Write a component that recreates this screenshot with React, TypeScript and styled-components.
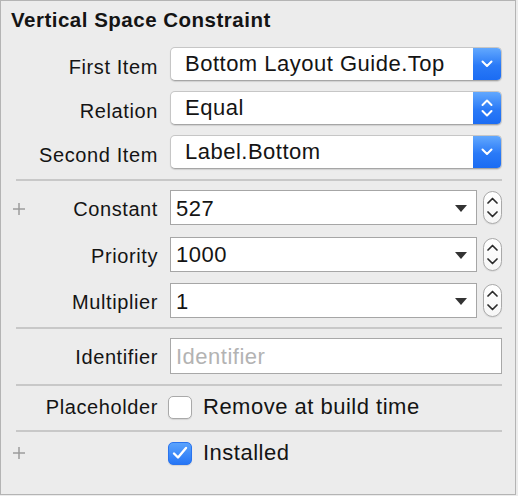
import { createGlobalStyle } from 'styled-components';
import styled from 'styled-components';

const GlobalStyle = createGlobalStyle`
  html, body {
    margin: 0;
    padding: 0;
    background-color: #ececec;
  }

  * {
    box-sizing: border-box;
  }
`;

const Panel = styled.div`
  width: 516px;
  height: 495px;
  border: 1px solid #b4b4b4;
  background-color: #ececec;
  padding-top: 6px;
  display: flex;
  flex-flow: column;
  font-family: 'Liberation Sans', Arial, sans-serif;
  color: #141414;
`;

const Title = styled.h1`
  margin: 0;
  padding-left: 10px;
  font-size: 20.5px;
  line-height: 26px;
  font-weight: 700;
  letter-spacing: 0.5px;
`;

const Section = styled.div<{ $gap: number; $top?: number }>`
  display: flex;
  flex-flow: column;
  gap: ${(p) => p.$gap}px;
  margin-top: ${(p) => p.$top ?? 0}px;
`;

const Separator = styled.div<{ $top?: number }>`
  height: 2px;
  background-color: #c8c8c8;
  margin: ${(p) => p.$top ?? 10}px 13px 9px 15px;
`;

const Row = styled.div<{ $height: number }>`
  display: grid;
  grid-template-columns: 157px 1fr;
  column-gap: 12px;
  align-items: center;
  height: ${(p) => p.$height}px;
  padding-right: 13px;
`;

const LabelCell = styled.div<{ $shift?: number }>`
  display: flex;
  align-items: center;
  justify-content: flex-end;
  padding-left: 11px;
  padding-top: ${(p) => p.$shift ?? 0}px;
  font-size: 20px;
  line-height: 22px;
  letter-spacing: 0.6px;
  white-space: nowrap;
`;

const PlusMark = styled.svg`
  margin-right: auto;
  flex: none;
`;

const PopUp = styled.div`
  display: flex;
  height: 100%;
  background-color: #fff;
  border: 1px solid #c6c6c6;
  border-bottom-color: #a6a6a6;
  border-radius: 5px;
  box-shadow: 0 1px 1px rgba(0, 0, 0, 0.12);
  overflow: hidden;
`;

const PopUpValue = styled.div`
  flex: 1;
  padding-left: 14px;
  font-size: 22px;
  line-height: 32px;
  letter-spacing: 0.5px;
  white-space: nowrap;
  overflow: hidden;
`;

const PopUpButton = styled.div`
  width: 28px;
  flex: none;
  display: flex;
  align-items: center;
  justify-content: center;
  background: linear-gradient(#62a8fe, #2a7af7 55%, #1b6cf3);
`;

const FieldGroup = styled.div`
  display: flex;
  align-items: center;
  gap: 6px;
  height: 100%;
`;

const Combo = styled.div`
  flex: 1;
  height: 100%;
  display: flex;
  align-items: center;
  background-color: #fff;
  border: 1px solid #a6a6a6;
  padding: 2px 9px 0 5px;
`;

const ComboValue = styled.span`
  flex: 1;
  font-size: 22px;
  line-height: 30px;
  letter-spacing: 0.5px;
`;

const Stepper = styled.div`
  width: 19px;
  height: 33px;
  flex: none;
  display: flex;
  flex-flow: column;
  align-items: center;
  justify-content: center;
  gap: 7px;
  border: 1px solid #a9a9a9;
  border-radius: 10px;
  background: linear-gradient(#ffffff, #f6f6f6);
  box-shadow: 0 1px 1px rgba(0, 0, 0, 0.08);
`;

const TextField = styled.div`
  height: 100%;
  background-color: #fff;
  border: 1px solid #a8a8a8;
  padding: 2px 5px 0;
  font-size: 22px;
  line-height: 32px;
  letter-spacing: 0.5px;
  color: #b3b3b3;
`;

const CheckRow = styled.label`
  display: flex;
  align-items: center;
  gap: 11px;
  margin-left: -2px;
  font-size: 22px;
  line-height: 24px;
  letter-spacing: 0.5px;
`;

const Box = styled.span<{ $checked?: boolean }>`
  width: 24px;
  height: 23px;
  flex: none;
  display: flex;
  align-items: center;
  justify-content: center;
  border-radius: 5px;
  border: 1px solid ${(p) => (p.$checked ? '#2a74ee' : '#a9a9a9')};
  background: ${(p) =>
    p.$checked ? 'linear-gradient(#5aa3fd, #2676f6)' : '#fff'};
  box-shadow: 0 1px 1px rgba(0, 0, 0, 0.1);
`;

function Plus() {
  return (
    <PlusMark width="14" height="14" viewBox="0 0 14 14">
      <path d="M7 1v12M1 7h12" stroke="#9c9c9c" strokeWidth="1.5" />
    </PlusMark>
  );
}

function ChevronDown() {
  return (
    <svg width="12" height="8" viewBox="0 0 12 8">
      <path
        d="M1.5 1.5 6 6l4.5-4.5"
        fill="none"
        stroke="#fff"
        strokeWidth="2"
        strokeLinecap="round"
        strokeLinejoin="round"
      />
    </svg>
  );
}

function ChevronUpDown() {
  return (
    <svg width="12" height="20" viewBox="0 0 12 20">
      <path
        d="M1.5 7 6 2.5 10.5 7M1.5 13 6 17.5 10.5 13"
        fill="none"
        stroke="#fff"
        strokeWidth="2"
        strokeLinecap="round"
        strokeLinejoin="round"
      />
    </svg>
  );
}

function StepArrow({ up }: { up?: boolean }) {
  return (
    <svg width="11" height="7" viewBox="0 0 11 7">
      <path
        d={up ? 'M1 6 5.5 1.5 10 6' : 'M1 1 5.5 5.5 10 1'}
        fill="none"
        stroke="#2b2b2b"
        strokeWidth="1.7"
        strokeLinecap="round"
        strokeLinejoin="round"
      />
    </svg>
  );
}

function Triangle() {
  return (
    <svg width="12" height="7" viewBox="0 0 12 7">
      <path d="M0 0h12L6 7z" fill="#333" />
    </svg>
  );
}

function Check() {
  return (
    <svg width="16" height="14" viewBox="0 0 16 14">
      <path
        d="M2 7.5 6 11.5 14 2"
        fill="none"
        stroke="#fff"
        strokeWidth="2.4"
        strokeLinecap="round"
        strokeLinejoin="round"
      />
    </svg>
  );
}

interface SelectRowProps {
  label: string;
  value: string;
  stepper?: boolean;
}

function SelectRow({ label, value, stepper }: SelectRowProps) {
  return (
    <Row $height={34}>
      <LabelCell $shift={6}>{label}</LabelCell>
      <PopUp>
        <PopUpValue>{value}</PopUpValue>
        <PopUpButton>{stepper ? <ChevronUpDown /> : <ChevronDown />}</PopUpButton>
      </PopUp>
    </Row>
  );
}

interface NumberRowProps {
  label: string;
  value: string;
  plus?: boolean;
}

function NumberRow({ label, value, plus }: NumberRowProps) {
  return (
    <Row $height={35}>
      <LabelCell $shift={3}>
        {plus && <Plus />}
        {label}
      </LabelCell>
      <FieldGroup>
        <Combo>
          <ComboValue>{value}</ComboValue>
          <Triangle />
        </Combo>
        <Stepper>
          <StepArrow up />
          <StepArrow />
        </Stepper>
      </FieldGroup>
    </Row>
  );
}

export default function App() {
  return (
    <>
      <GlobalStyle />
      <Panel>
        <Title>Vertical Space Constraint</Title>

        <Section $gap={10} $top={14}>
          <SelectRow label="First Item" value="Bottom Layout Guide.Top" />
          <SelectRow label="Relation" value="Equal" stepper />
          <SelectRow label="Second Item" value="Label.Bottom" />
        </Section>

        <Separator />

        <Section $gap={11.5}>
          <NumberRow label="Constant" value="527" plus />
          <NumberRow label="Priority" value="1000" />
          <NumberRow label="Multiplier" value="1" />
        </Section>

        <Separator $top={9} />

        <Row $height={36}>
          <LabelCell $shift={2}>Identifier</LabelCell>
          <TextField>Identifier</TextField>
        </Row>

        <Separator />

        <Row $height={24}>
          <LabelCell>Placeholder</LabelCell>
          <CheckRow>
            <Box />
            Remove at build time
          </CheckRow>
        </Row>

        <Separator $top={11} />

        <Row $height={24}>
          <LabelCell>
            <Plus />
          </LabelCell>
          <CheckRow>
            <Box $checked>
              <Check />
            </Box>
            Installed
          </CheckRow>
        </Row>
      </Panel>
    </>
  );
}
